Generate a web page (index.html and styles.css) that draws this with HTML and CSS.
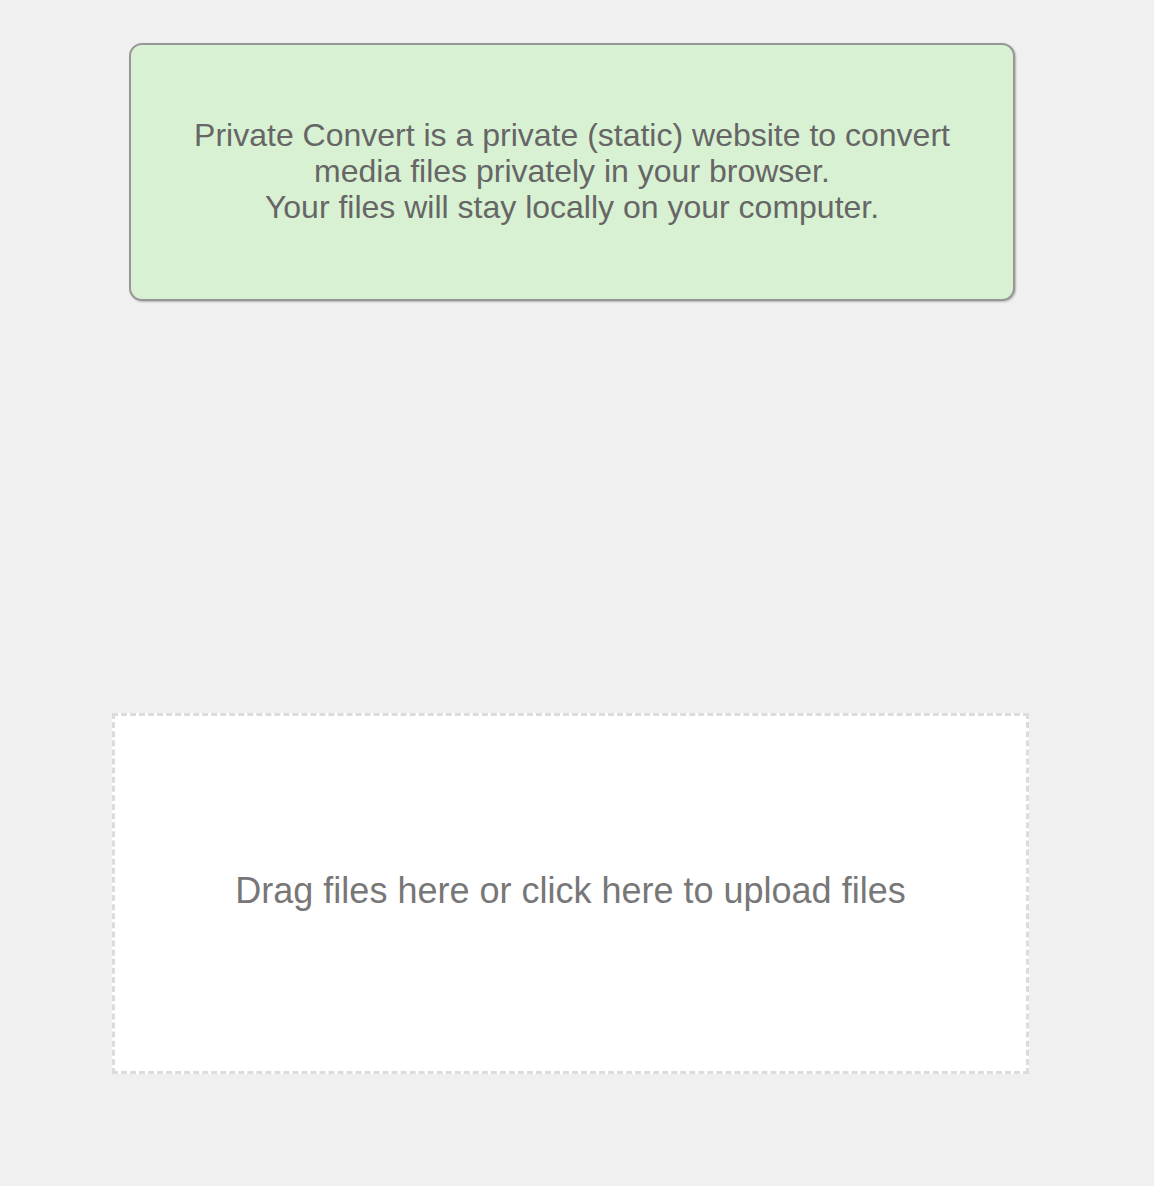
FILE: index.html
```html
<!DOCTYPE html>
<html lang="en">
<head>
<meta charset="utf-8">
<title>Private Convert</title>
<link rel="stylesheet" href="styles.css">
</head>
<body>
<main class="page">
  <section class="intro">
    <p class="intro-text">Private Convert is a private (static) website to convert<br>media files privately in your browser.<br>Your files will stay locally on your computer.</p>
  </section>
  <section class="dropzone">
    <span class="dropzone-text">Drag files here or click here to upload files</span>
  </section>
</main>
</body>
</html>
```

FILE: styles.css
```css
html, body {
  margin: 0;
  padding: 0;
  background: #f0f0f0;
}
body {
  font-family: "Liberation Sans", Arial, sans-serif;
  height: 1186px;
}
.page {
  display: flex;
  flex-direction: column;
  align-items: flex-start;
  padding-top: 43px;
}
.intro {
  box-sizing: border-box;
  width: 886px;
  height: 258px;
  margin-left: 129px;
  background: #d9f1d3;
  border: 2px solid #979797;
  border-radius: 13px;
  box-shadow: 1px 1px 2px rgba(0, 0, 0, 0.25);
  display: flex;
  align-items: center;
  justify-content: center;
}
.intro-text {
  margin: 0;
  text-align: center;
  color: #666;
  font-size: 32px;
  line-height: 36px;
  padding-bottom: 2px;
}
.dropzone {
  box-sizing: border-box;
  width: 917px;
  height: 361px;
  margin-left: 112px;
  margin-top: 412px;
  background: #fff;
  border: 3px dashed #dcdcdc;
  display: flex;
  align-items: center;
  justify-content: center;
}
.dropzone-text {
  color: #777;
  font-size: 36px;
  line-height: 40px;
  padding-bottom: 6px;
}
```
